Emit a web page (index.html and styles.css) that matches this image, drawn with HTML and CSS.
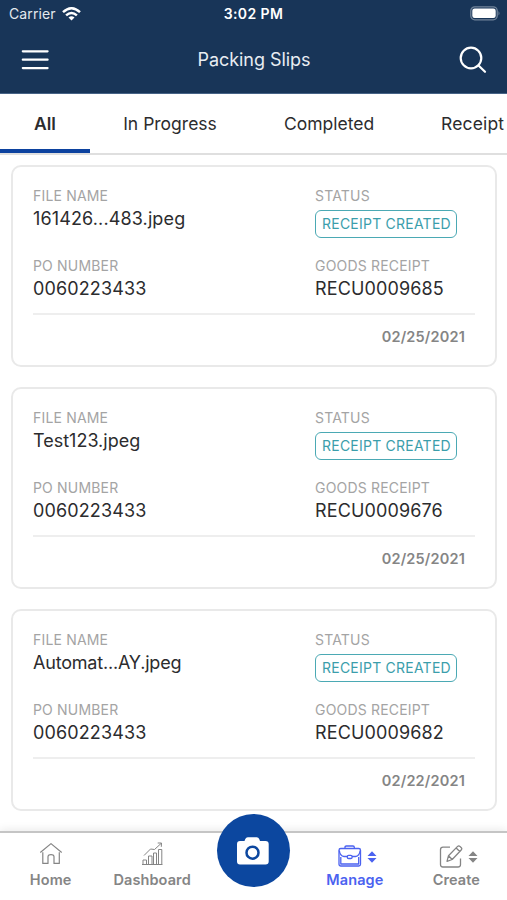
FILE: index.html
```html
<!DOCTYPE html>
<html lang="en">
<head>
<meta charset="utf-8">
<title>Packing Slips</title>
<link rel="stylesheet" href="styles.css">
</head>
<body>
<div class="app">
  <header class="header">
    <div class="status">
      <div class="carrier"><span>Carrier</span>
        <svg width="19" height="14" viewBox="0 0 19 14" fill="none" stroke="#fff" stroke-width="2.5"><path d="M1 5.2Q9.500-2.600 18 5.200"/><path d="M4.100 8.400Q9.500 3.500 14.900 8.400"/><path d="M9.500 13.600L6.500 10.500Q9.500 8 12.500 10.500Z" fill="#fff" stroke="none"/></svg>
      </div>
      <span class="time">3:02 PM</span>
      <svg class="battery" width="31" height="15" viewBox="0 0 31 15"><rect x=".8" y=".8" width="26.400" height="13" rx="4" fill="none" stroke="#71849a" stroke-width="1.300"/><rect x="2.300" y="2.500" width="23.400" height="9.600" rx="2.300" fill="#fff"/><path d="M28.500 5Q30.500 7.300 28.500 9.600Z" fill="#71849a"/></svg>
    </div>
    <div class="titlebar">
      <svg width="28" height="22" viewBox="0 0 28 22" stroke="#fff" stroke-width="2.200" stroke-linecap="round"><path d="M1.800 2.300H26.600M1.800 10.700H26.600M1.800 19.100H26.600"/></svg>
      <h1>Packing Slips</h1>
      <svg width="28" height="28" viewBox="0 0 28 28" fill="none" stroke="#fff" stroke-width="2.200" stroke-linecap="round"><circle cx="12" cy="12" r="10.300"/><path d="M19.500 19.500L26 25.800"/></svg>
    </div>
  </header>
  <nav class="tabs">
    <a class="tab tab-active">All</a>
    <a class="tab tab-progress">In Progress</a>
    <a class="tab tab-completed">Completed</a>
    <a class="tab tab-receipt">Receipt</a>
  </nav>
  <main class="list">
    <article class="card">
      <div class="fields">
        <div class="field"><span class="label">FILE NAME</span><span class="value">161426...483.jpeg</span></div>
        <div class="field"><span class="label">STATUS</span><span class="badge">RECEIPT CREATED</span></div>
        <div class="field"><span class="label">PO NUMBER</span><span class="value">0060223433</span></div>
        <div class="field"><span class="label">GOODS RECEIPT</span><span class="value">RECU0009685</span></div>
      </div>
      <time class="date">02/25/2021</time>
    </article>
    <article class="card">
      <div class="fields">
        <div class="field"><span class="label">FILE NAME</span><span class="value value-natural">Test123.jpeg</span></div>
        <div class="field"><span class="label">STATUS</span><span class="badge">RECEIPT CREATED</span></div>
        <div class="field"><span class="label">PO NUMBER</span><span class="value">0060223433</span></div>
        <div class="field"><span class="label">GOODS RECEIPT</span><span class="value">RECU0009676</span></div>
      </div>
      <time class="date">02/25/2021</time>
    </article>
    <article class="card">
      <div class="fields">
        <div class="field"><span class="label">FILE NAME</span><span class="value value-tight">Automat...AY.jpeg</span></div>
        <div class="field"><span class="label">STATUS</span><span class="badge">RECEIPT CREATED</span></div>
        <div class="field"><span class="label">PO NUMBER</span><span class="value">0060223433</span></div>
        <div class="field"><span class="label">GOODS RECEIPT</span><span class="value">RECU0009682</span></div>
      </div>
      <time class="date">02/22/2021</time>
    </article>
  </main>
  <footer class="bottom">
    <a class="item">
      <span class="icons"><svg width="24" height="24" viewBox="0 0 24 24" fill="none" stroke="currentColor" stroke-width="1.200" stroke-linejoin="round"><path d="M1.300 10.500L12 1.600L22.700 10.500"/><path d="M3.800 10.300V21.400H9V14.500Q9.400 12.600 12 12.600T15 14.500V21.400H20.300V10.300"/></svg></span>
      <span class="name">Home</span>
    </a>
    <a class="item">
      <span class="icons"><svg width="24" height="24" viewBox="0 0 24 24" fill="none" stroke="currentColor" stroke-width="1" stroke-linejoin="round"><path d="M2 22.500H22.500M3 22V18H6.500V22M8.500 22V14H12V22M13.500 22V11H16.500V22M18.500 22V7.500H21.800V22"/><path d="M4 13.500L10.500 7L14.500 7.500L21 1.500M17.700 1L21.500 1L21.300 4.800"/></svg></span>
      <span class="name">Dashboard</span>
    </a>
    <button class="camera" aria-label="Camera">
      <svg width="34" height="30" viewBox="0 0 34 30"><path d="M4 5H8.500L9.300 3Q10 1.300 11.800 1.300H20.700Q22.500 1.300 23.200 3L24 5H29.500Q32.700 5 32.700 8V25.500Q32.700 28.500 29.500 28.500H4Q1 28.500 1 25.500V8Q1 5 4 5Z" fill="#fff"/><circle cx="16.500" cy="16.700" r="6" fill="none" stroke="#0c479f" stroke-width="2.500"/></svg>
    </button>
    <a class="item item-active">
      <span class="icons icons-menu"><svg width="24" height="24" viewBox="0 0 24 24" fill="none" stroke="currentColor" stroke-width="1.300" stroke-linejoin="round"><rect x="1" y="3.500" width="21.500" height="17.500" rx="1.800"/><path d="M7 3.500V2.300Q7 1 8.300 1H15Q16.300 1 16.300 2.300V3.500M1.300 5.500Q2 11 6 11.500H9.500M14 11.500H17.500Q21.500 11 22.200 5.500M2.800 12V19H20.700V12"/><rect x="9.300" y="10.300" width="4.800" height="3.200" rx="1.300"/></svg><svg width="10" height="12" viewBox="0 0 10 12" fill="currentColor"><path d="M5 .3L9.500 5H.5ZM5 11.700L.5 7H9.500Z"/></svg></span>
      <span class="name">Manage</span>
    </a>
    <a class="item">
      <span class="icons icons-menu"><svg width="24" height="24" viewBox="0 0 24 24" fill="none" stroke="currentColor" stroke-width="1.300" stroke-linejoin="round"><path d="M11 2.200H4Q1.500 2.200 1.500 4.700V19.500Q1.500 22 4 22H19Q21.500 22 21.500 19.500V13.500"/><path d="M8 16.300L9.500 10.700L18.600 1.400Q19.700 .4 21 1.400L22.300 2.700Q23.300 3.900 22.200 5L13.200 14.500ZM17.200 3L20.700 6.500M9.500 10.700L13.200 14.500"/></svg><svg width="10" height="12" viewBox="0 0 10 12" fill="currentColor"><path d="M5 .3L9.500 5H.5ZM5 11.700L.5 7H9.500Z"/></svg></span>
      <span class="name">Create</span>
    </a>
  </footer>
</div>
</body>
</html>
```
FILE: styles.css
```css
* { box-sizing: border-box; }
body { margin: 0; font-family: Inter, "Liberation Sans", sans-serif; color: #2c2c2e; background: #fff; }
.app { width: 507px; height: 900px; overflow: hidden; display: flex; flex-direction: column; }

.header { flex: none; height: 94px; background: #183558; border-bottom: 1px solid #466386; color: #fff; }
.status { height: 27px; display: grid; grid-template-columns: 1fr auto 1fr; align-items: center; padding: 0 6px 0 9px; }
.carrier { display: flex; align-items: center; gap: 6px; font-size: 14px; color: #e4e9ee; letter-spacing: .1px; }
.time { font-size: 14px; font-weight: 600; letter-spacing: .4px; margin-right: 3px; }
.battery { justify-self: end; }
.titlebar { height: 66px; display: grid; grid-template-columns: 28px 1fr 28px; align-items: center; padding: 0 20px 0 21px; }
.titlebar h1 { margin: 0; padding-bottom: 2px; text-align: center; font-size: 18px; letter-spacing: -.05px; font-weight: 400; color: #e8edf2; }

.tabs { flex: none; height: 61px; display: flex; border-bottom: 2px solid #dfdfdf; font-size: 17.500px; line-height: 60px; white-space: nowrap; overflow: hidden; }
.tab { flex: none; text-align: center; }
.tab-active { width: 90px; font-weight: 600; height: 60px; border-bottom: 5px solid #0c429f; }
.tab-progress { width: 160px; }
.tab-completed { width: 158px; }
.tab-receipt { padding-left: 33px; letter-spacing: .15px; }

.list { flex: 1; min-height: 0; padding: 10px 10px 0 11px; display: flex; flex-direction: column; gap: 20px; }
.card { flex: none; height: 202px; border: 2px solid #e9e9e9; border-radius: 10px; padding: 20px 20px 0; }
.fields { height: 128px; border-bottom: 2px solid #eee; display: grid; grid-template-columns: 282px 1fr; grid-template-rows: 70px 1fr; }
.field { display: flex; flex-direction: column; align-items: flex-start; white-space: nowrap; }
.label { font-size: 14px; line-height: 18px; letter-spacing: .18px; color: #a4a4a4; }
.value { font-size: 18px; line-height: 28px; letter-spacing: .13px; }
.value-natural { letter-spacing: 0; }
.value-tight { letter-spacing: -.2px; }
.badge { width: 142px; height: 28px; margin-top: 5px; border: 1.500px solid #4ba9b4; border-radius: 6px; padding-left: 6px; font-size: 14px; line-height: 26px; color: #3b9eab; letter-spacing: .23px; }
.date { display: block; text-align: right; padding-right: 10px; font-size: 14.500px; line-height: 44px; font-weight: 600; letter-spacing: .18px; color: #858585; }

.bottom { position: relative; flex: none; height: 69px; border-top: 2px solid #c5c5c5; box-shadow: 0 -2px 8px rgba(0,0,0,.08); background: #fff; display: grid; grid-template-columns: repeat(5, 1fr); color: #858585; }
.item { display: flex; flex-direction: column; align-items: center; padding-top: 6px; }
.icons { display: flex; align-items: center; gap: 5px; height: 30px; }
.icons-menu { padding: 5px 0 0 5px; }
.name { font-size: 14.500px; line-height: 22px; font-weight: 600; letter-spacing: .1px; }
.item-active { color: #4b62f0; }
.camera { width: 73px; height: 73px; margin: -19px 0 0; justify-self: center; border: 0; border-radius: 50%; background: #0c479f; display: flex; align-items: center; justify-content: center; padding: 0; }
```
